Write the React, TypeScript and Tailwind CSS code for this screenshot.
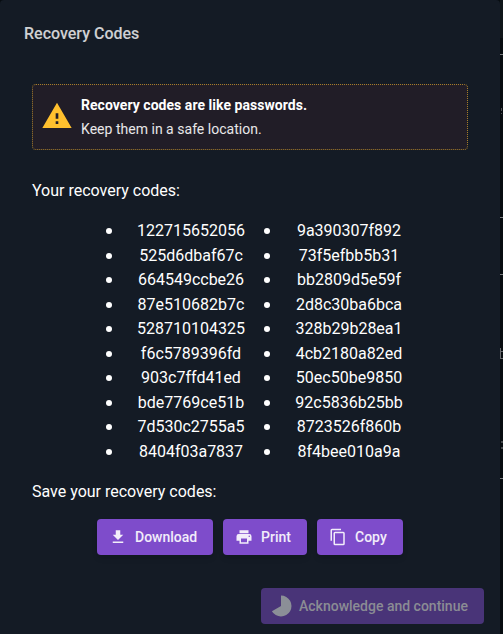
import React from "react";

const leftCodes = ["122715652056", "525d6dbaf67c", "664549ccbe26", "87e510682b7c", "528710104325", "f6c5789396fd", "903c7ffd41ed", "bde7769ce51b", "7d530c2755a5", "8404f03a7837"];
const rightCodes = ["9a390307f892", "73f5efbb5b31", "bb2809d5e59f", "2d8c30ba6bca", "328b29b28ea1", "4cb2180a82ed", "50ec50be9850", "92c5836b25bb", "8723526f860b", "8f4bee010a9a"];

function Icon({ d, className }: { d: string; className: string }) {
  return (
    <svg viewBox="0 0 24 24" className={className} fill="currentColor" aria-hidden="true">
      <path d={d} />
    </svg>
  );
}

function CodeList({ codes, className }: { codes: string[]; className: string }) {
  return (
    <ul className={"flex flex-col " + className}>
      {codes.map((code) => (
        <li key={code} className="flex h-[24.5px] items-center">
          <span className="h-[6px] w-[6px] shrink-0 rounded-full bg-white" />
          <span className="flex-1 pl-[22px] text-center">{code}</span>
        </li>
      ))}
    </ul>
  );
}

function ActionButton({ d, label, className }: { d: string; label: string; className: string }) {
  return (
    <button className={"flex h-9 items-center rounded bg-[#7e4ccb] pl-3 text-sm font-medium text-white/90 shadow-md " + className}>
      <Icon d={d} className="mr-2 h-[18px] w-[18px] shrink-0" />
      {label}
    </button>
  );
}

export default function App() {
  return (
    <div className="flex h-[634px] w-[503px] overflow-hidden bg-[#070c10] font-['Roboto',sans-serif] text-base text-white">
      <main className="flex w-[500px] shrink-0 flex-col rounded-t bg-[#141b25]">
        <h1 className="ml-6 mt-[22px] h-6 font-medium leading-6 text-white/80">Recovery Codes</h1>
        <section className="mx-8 mt-[38px] flex h-[66px] items-center rounded border border-dotted border-[#ffc02e]/60 bg-[#211d27] pl-2 text-sm leading-6">
          <Icon d="M13,14H11V10H13M13,18H11V16H13M1,21H23L12,2L1,21Z" className="mr-2 h-8 w-8 -translate-y-px text-[#ffc02e]" />
          <div>
            <p className="font-bold tracking-[0.04px]">Recovery codes are like passwords.</p>
            <p className="tracking-[0.02px] text-white/90">Keep them in a safe location.</p>
          </div>
        </section>
        <p className="ml-8 mt-[29px] h-6 leading-6">Your recovery codes:</p>
        <div className="mt-4 flex leading-6">
          <CodeList codes={leftCodes} className="ml-[106px] w-[142px]" />
          <CodeList codes={rightCodes} className="ml-4 w-[142px]" />
        </div>
        <p className="ml-8 mt-4 h-6 leading-6">Save your recovery codes:</p>
        <div className="mt-[15px] flex justify-center gap-[10px]">
          <ActionButton label="Download" className="w-[116px]" d="M5,20H19V18H5M19,9H15V3H9V9H5L12,16L19,9Z" />
          <ActionButton label="Print" className="w-[84px]" d="M18,3H6V7H18M19,12A1,1 0 0,1 18,11A1,1 0 0,1 19,10A1,1 0 0,1 20,11A1,1 0 0,1 19,12M16,19H8V14H16M19,8H5A3,3 0 0,0 2,11V17H6V21H18V17H22V11A3,3 0 0,0 19,8Z" />
          <ActionButton label="Copy" className="w-[86px]" d="M19,21H8V7H19M19,5H8A2,2 0 0,0 6,7V21A2,2 0 0,0 8,23H19A2,2 0 0,0 21,21V7A2,2 0 0,0 19,5M16,1H4A2,2 0 0,0 2,3V17H4V3H16V1Z" />
        </div>
        <button disabled className="ml-auto mr-4 mt-[33px] flex h-9 w-[223px] items-center rounded bg-[#493478] pl-2 text-sm font-medium text-[#8b8c94]">
          <Icon d="M12,12V1.5A10.5,10.5 0 1,1 2.9,17.25Z" className="mr-1.5 h-6 w-6 text-[#8b8f97]" />
          Acknowledge and continue
        </button>
      </main>
      <aside className="w-[3px] bg-[#070c10]">
        <div className="h-[38px] bg-[#0f1519]" />
        <div className="mt-4 h-px bg-[#777a7d]" />
        <div className="ml-px mt-[53px] h-[3px] w-px bg-[#505356]" />
        <div className="ml-px mt-[2px] h-px w-px bg-[#505356]" />
        <div className="mt-[103px] h-px bg-[#777a7d]" />
        <div className="mt-14 h-px bg-[#777a7d]" />
        <div className="mt-[73px] flex h-[11px] flex-col border-b border-l border-[#66696c] pt-[3px]">
          <div className="h-px bg-[#66696c]" />
        </div>
        <div className="ml-px mt-[82px] h-[2px] bg-[#44474a]" />
        <div className="ml-px mt-1 h-[2px] bg-[#44474a]" />
        <div className="mt-[29px] h-px bg-[#777a7d]" />
      </aside>
    </div>
  );
}
